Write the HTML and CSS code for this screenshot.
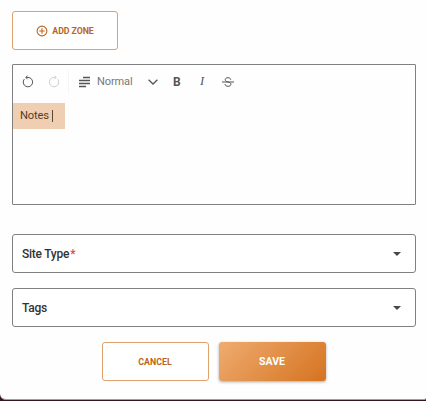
FILE: index.html
```html
<!DOCTYPE html>
<html lang="en">
<head>
<meta charset="utf-8">
<title>Site</title>
<link rel="stylesheet" href="styles.css">
</head>
<body>
<form class="dialog">
  <button type="button" class="btn add">
    <svg width="12" height="12" viewBox="0 0 12 12" fill="none" stroke="currentColor" stroke-width="1.1"><circle cx="6" cy="6" r="4.9"/><path d="M6 3.3v5.4M3.3 6h5.4"/></svg>
    <span>ADD ZONE</span>
  </button>
  <section class="editor">
    <div class="toolbar">
      <svg class="undo" width="12" height="13" viewBox="0 0 12 13" fill="none" stroke="currentColor" stroke-width="1"><path d="M2.3 4.1A4.7 4.7 0 1 0 6 2.4H4M5.5.6 3.8 2.4l1.7 1.8"/></svg>
      <svg class="redo" width="12" height="13" viewBox="0 0 12 13" fill="none" stroke="currentColor" stroke-width="1"><path d="M9.7 4.1A4.7 4.7 0 1 1 6 2.4h2M6.5.6l1.7 1.8-1.7 1.8"/></svg>
      <span class="divider"></span>
      <svg class="para" width="12" height="12" viewBox="0 0 12 12" stroke="currentColor" stroke-width="1.4"><path d="M4 1.5h7M0 4.5h11M0 7.5h11M0 10.5h7"/></svg>
      <span class="format">Normal</span>
      <svg class="chevron" width="10" height="6" viewBox="0 0 10 6" fill="none" stroke="currentColor" stroke-width="1.3"><path d="m.6.7 4.4 4.3L9.4.7"/></svg>
      <b class="bold">B</b>
      <i class="italic">I</i>
      <svg class="strike" width="12" height="10" viewBox="0 0 12 10" fill="none" stroke="currentColor" stroke-width="1"><path d="M0 5h12M8.800 2.800C8.600 1.400 7.400.7 6 .7c-1.600 0-2.800.7-2.800 2C3.200 4 4.500 4.500 6 5c1.800.4 2.900 1 2.900 2.200 0 1.300-1.200 2.100-2.900 2.100-1.700 0-2.900-.7-3-2.200"/></svg>
    </div>
    <div class="note">Notes<span class="caret"></span></div>
  </section>
  <div class="select site"><span>Site Type<span class="required">*</span></span><span class="arrow"></span></div>
  <div class="select tags"><span>Tags</span><span class="arrow"></span></div>
  <div class="actions">
    <button type="button" class="btn">CANCEL</button>
    <button type="button" class="btn save">SAVE</button>
  </div>
</form>
</body>
</html>
```
FILE: styles.css
```css
* { box-sizing: border-box; }
body {
  margin: 0;
  height: 401px;
  overflow: hidden;
  background: #351722;
  font-family: Roboto, "Liberation Sans", sans-serif;
  color: #333;
}
.dialog {
  height: 400px;
  padding: 11px 10px 0 12px;
  background: #fefefe;
  border-bottom: 1px solid #a89ca2;
  border-radius: 0 0 2px 6px;
}
.btn {
  display: flex;
  align-items: center;
  justify-content: center;
  width: 107px;
  height: 39px;
  padding: 0 1px 0 0;
  border: 1px solid #dea36c;
  border-radius: 3px;
  background: #fff;
  color: #bb6420;
  font: 700 8.8px/12px Roboto, sans-serif;
}
.add { width: 106px; gap: 4px; padding: 0; }
.add span { letter-spacing: -0.08px; }
.editor {
  width: 404px;
  height: 141px;
  margin-top: 14px;
  border: 1px solid #808080;
  border-radius: 1px;
  background: #fefefe;
}
.toolbar {
  display: flex;
  align-items: center;
  height: 33px;
  padding-left: 9px;
  color: #555;
}
.redo { margin-left: 14px; color: #d0d0d0; }
.divider { width: 1px; height: 25px; margin-left: 8px; background: #f5f5f5; }
.para { margin-left: 10px; }
.format { width: 36px; margin-left: 6px; font-size: 11px; line-height: 14px; letter-spacing: -0.1px; color: #777; }
.chevron { margin-left: 15px; }
.bold { width: 10px; margin-left: 15px; font-size: 12px; }
.italic { width: 8px; margin-left: 17px; font: italic 12.5px "Liberation Serif", serif; }
.strike { margin-left: 14px; }
.note {
  display: flex;
  align-items: center;
  width: 52px;
  height: 26px;
  margin: 5px 0 0;
  padding: 0 0 1px 7px;
  background: #f0ceb2;
  color: #5a3a24;
  font-size: 11.2px;
  letter-spacing: -0.2px;
}
.caret { width: 1px; height: 12px; margin-left: 3px; background: #5d4636; }
.select {
  display: flex;
  align-items: center;
  justify-content: space-between;
  width: 404px;
  height: 39px;
  padding: 0 14px 0 9px;
  border: 1px solid #808080;
  border-radius: 3px;
  background: #fff;
  font-size: 12px;
  font-weight: 500;
  letter-spacing: -0.25px;
}
.site { margin-top: 29px; }
.tags { margin-top: 15px; }
.required { margin-left: 1px; color: #d94a50; }
.arrow {
  border: 4.5px solid transparent;
  border-top: 4px solid #484848;
  border-bottom: 0;
}
.actions { display: flex; gap: 10px; margin: 15px 0 0 90px; }
.save {
  border: 0;
  background: linear-gradient(135deg, #efac70, #d57320);
  color: #fff;
  font-size: 10.5px;
  box-shadow: 0 1px 3px rgba(0, 0, 0, .35);
}
```
